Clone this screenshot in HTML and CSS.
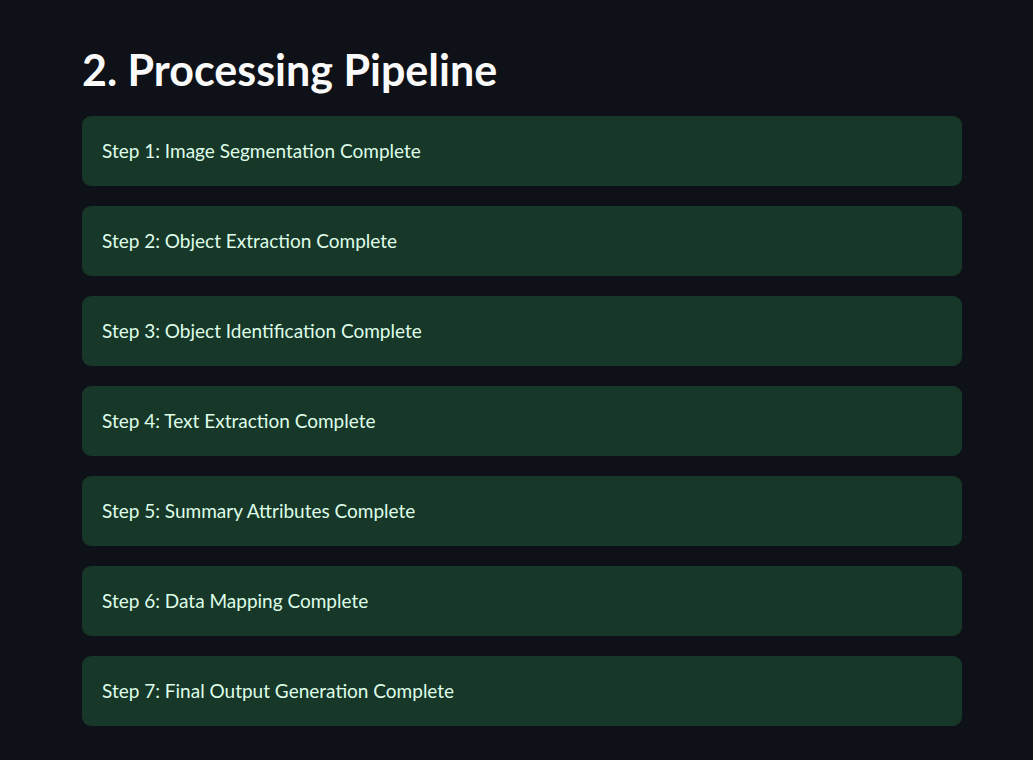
FILE: index.html
```html
<!DOCTYPE html>
<html lang="en">
<head>
<meta charset="utf-8">
<title>Processing Pipeline</title>
<link rel="stylesheet" href="styles.css">
</head>
<body>
<main class="main">
  <h1 class="title">2. Processing Pipeline</h1>
  <div class="steps">
    <div class="alert">Step 1: Image Segmentation Complete</div>
    <div class="alert">Step 2: Object Extraction Complete</div>
    <div class="alert">Step 3: Object Identification Complete</div>
    <div class="alert">Step 4: Text Extraction Complete</div>
    <div class="alert">Step 5: Summary Attributes Complete</div>
    <div class="alert">Step 6: Data Mapping Complete</div>
    <div class="alert">Step 7: Final Output Generation Complete</div>
  </div>
</main>
</body>
</html>
```

FILE: styles.css
```css
html, body {
  margin: 0;
  padding: 0;
  background: #0e1117;
  height: 100%;
}
body {
  font-family: Lato, "Noto Sans", "Liberation Sans", sans-serif;
  color: #fafafa;
}
.main {
  width: 880px;
  padding: 44px 0 0 82px;
}
.title {
  margin: 0 0 20px 0;
  font-size: 43px;
  font-weight: 700;
  line-height: 1.2;
  color: #fafafa;
}
.steps {
  display: flex;
  flex-direction: column;
  gap: 20px;
}
.alert {
  height: 70px;
  box-sizing: border-box;
  display: flex;
  align-items: center;
  padding: 2px 20px 0;
  background: #173828;
  color: #dffde9;
  border-radius: 9px;
  font-size: 19px;
  line-height: 1.6;
}
```
